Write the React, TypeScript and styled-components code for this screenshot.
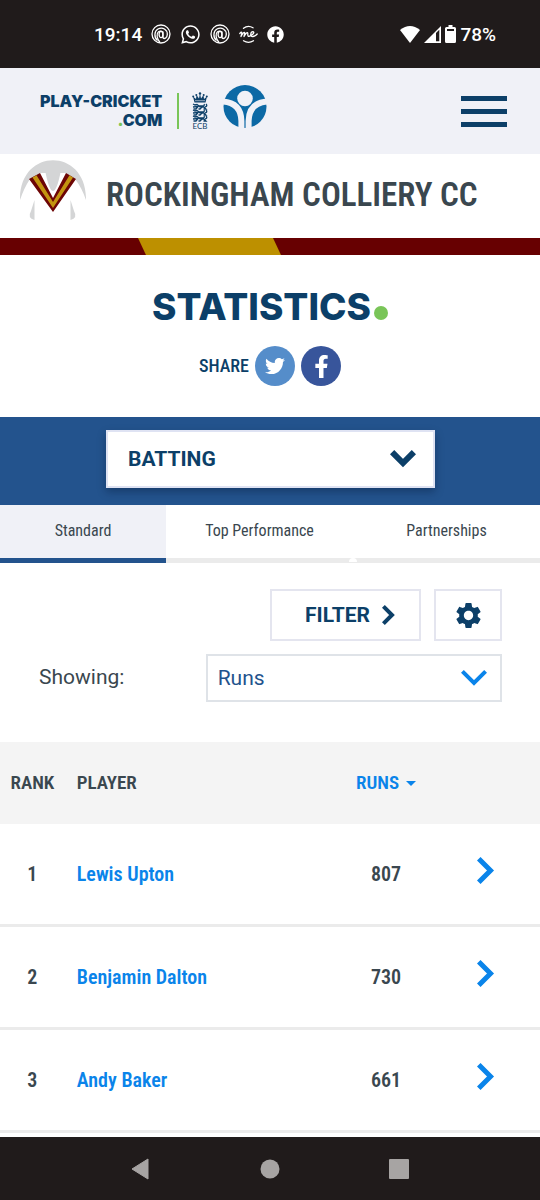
import React from 'react';
import styled, { createGlobalStyle } from 'styled-components';
import { FaWhatsapp, FaFacebook, FaTwitter, FaFacebookF } from 'react-icons/fa';
import { MdSettings } from 'react-icons/md';

const navy = '#0c3f68';
const sky = '#0a84ea';
const slate = '#3a474f';
const narrow = '"Roboto Condensed", "Liberation Sans Narrow", Roboto, sans-serif';

const GlobalStyle = createGlobalStyle`
  *, *::before, *::after { box-sizing: border-box; }
  body { margin: 0; background: #fff; font-family: Roboto, sans-serif; color: ${slate}; }
  a { color: inherit; text-decoration: none; }
  button, select { font: inherit; color: inherit; border-radius: 0; margin: 0; }
  svg { display: block; flex: none; }
`;

const Page = styled.div`
  min-height: 100vh;
  display: flex;
  flex-direction: column;
`;

const StatusBar = styled.div`
  height: 68px;
  padding: 0 44px 0 94px;
  display: flex;
  align-items: center;
  justify-content: space-between;
  background: #201b1b;
  color: #fff;
  font-size: 19px;
  font-weight: 500;
`;

const StatusGroup = styled.div<{ $gap: number }>`
  display: flex;
  align-items: center;
  gap: ${p => p.$gap}px;
`;

const Header = styled.header`
  height: 86px;
  padding: 0 33px 0 40px;
  display: flex;
  align-items: center;
  justify-content: space-between;
  background: #f0f1f7;
`;

const Brand = styled.a`
  display: flex;
  align-items: center;
  gap: 13px;
`;

const Wordmark = styled.span`
  display: flex;
  flex-direction: column;
  margin-right: 2px;
  font: 900 16px/19px Inter, sans-serif;
  color: ${navy};
  text-align: right;
`;

const BrandDot = styled.span`
  color: #79c558;
`;

const BrandRule = styled.span`
  width: 2px;
  height: 36px;
  background: #79c558;
`;

const BrandBall = styled.span`
  padding: 0 0 8px 2px;
`;

const MenuButton = styled.button`
  border: 0;
  padding: 0;
  background: none;
`;

const ClubBar = styled.section`
  height: 84px;
  padding: 0 20px;
  display: flex;
  align-items: center;
  gap: 20px;
`;

const Crest = styled.span`
  padding-bottom: 12px;
`;

const ClubName = styled.h1`
  margin: 0;
  padding-bottom: 2px;
  font: 600 33px/40px ${narrow};
  color: ${slate};
  white-space: nowrap;
`;

const Stripe = styled.div`
  height: 17px;
  display: grid;
  grid-template-columns: 138fr 143fr 259fr;
  background: #670001;
`;

const StripeAccent = styled.div`
  grid-column: 2;
  background: #bd9000;
  clip-path: polygon(0 0, calc(100% - 8px) 0, 100% 100%, 8px 100%);
`;

const TitleBlock = styled.section`
  height: 162px;
  padding-top: 28px;
  display: flex;
  flex-direction: column;
  align-items: center;
  gap: 15px;
`;

const Title = styled.h2`
  margin: 0;
  display: flex;
  align-items: baseline;
  gap: 3px;
  font: 800 37px/48px Inter, sans-serif;
  color: ${navy};
`;

const TitleDot = styled.span`
  width: 14px;
  height: 14px;
  border-radius: 50%;
  background: #79c558;
`;

const ShareRow = styled.div`
  display: flex;
  align-items: center;
  gap: 6px;
`;

const ShareLabel = styled.span`
  font: 500 18px/24px ${narrow};
  color: ${navy};
`;

const ShareLink = styled.a<{ $color: string }>`
  width: 40px;
  height: 40px;
  border-radius: 50%;
  display: flex;
  align-items: center;
  justify-content: center;
  background: ${p => p.$color};
  color: #fff;
`;

const CategoryBar = styled.section`
  height: 88px;
  padding: 13px 105px 0 106px;
  background: #23538d;
`;

const SelectBox = styled.div<{ $category?: boolean }>`
  display: grid;
  align-items: center;
  flex: 1;
  height: ${p => (p.$category ? 58 : 48)}px;
  border: ${p => (p.$category ? '2px solid #dfe3f3' : '2px solid #dfe3e8')};
  box-shadow: ${p => (p.$category ? '0 4px 8px rgba(0, 20, 50, 0.35)' : 'none')};
  background: #fff;
  color: ${p => (p.$category ? navy : '#23538d')};
  font-size: 21px;
  font-weight: ${p => (p.$category ? 700 : 400)};

  select, svg { grid-area: 1 / 1; }
  select {
    width: 100%;
    height: 100%;
    border: 0;
    padding: ${p => (p.$category ? '0 20px 1px' : '0 10px 1px')};
    appearance: none;
    background: transparent;
  }
  svg {
    justify-self: end;
    margin-right: ${p => (p.$category ? 17 : 13)}px;
    pointer-events: none;
  }
`;

const Tabs = styled.nav`
  display: grid;
  grid-template-columns: 166fr 187fr 187fr;
`;

const Tab = styled.a<{ $active?: boolean; $notch?: boolean }>`
  position: relative;
  height: 58px;
  padding-top: 13px;
  text-align: center;
  font: 400 16px/26px ${narrow};
  background: ${p => (p.$active ? '#f0f1f7' : '#fff')};
  border-bottom: 5px solid ${p => (p.$active ? '#23538d' : '#ebebeb')};

  &::after {
    content: '';
    display: ${p => (p.$notch ? 'block' : 'none')};
    position: absolute;
    left: -4px;
    bottom: -4px;
    width: 8px;
    height: 4px;
    border-radius: 4px 4px 0 0;
    background: #fff;
  }
`;

const Controls = styled.section`
  height: 179px;
  padding: 26px 38px 0 39px;
  display: flex;
  flex-direction: column;
  gap: 13px;
`;

const ButtonRow = styled.div`
  display: flex;
  justify-content: flex-end;
  gap: 13px;
`;

const OutlineButton = styled.button<{ $wide?: boolean }>`
  width: ${p => (p.$wide ? 151 : 68)}px;
  height: 52px;
  padding: ${p => (p.$wide ? '0 0 0 9px' : '0')};
  display: flex;
  align-items: center;
  justify-content: center;
  gap: 12px;
  border: 2px solid #e4e5ef;
  background: #fff;
  color: ${navy};
  font-size: 21px;
  font-weight: 700;
`;

const ShowingRow = styled.div`
  display: flex;
  align-items: center;
`;

const ShowingLabel = styled.label`
  width: 36%;
  padding-bottom: 2px;
  font-size: 21px;
  line-height: 28px;
`;

const Table = styled.table`
  width: 100%;
  table-layout: fixed;
  border-collapse: separate;
  border-spacing: 0;
  font: 600 20px/26px ${narrow};
`;

const RankCol = styled.col`
  width: 12%;
`;

const PlayerCol = styled.col`
  width: 50%;
`;

const HeadCell = styled.th<{ $name?: boolean }>`
  height: 82px;
  padding: 0 0 0 ${p => (p.$name ? 12 : 0)}px;
  background: #f4f4f4;
  font-size: 19px;
  font-weight: 600;
  text-align: ${p => (p.$name ? 'left' : 'center')};
`;

const Cell = styled.td<{ $name?: boolean }>`
  height: 103px;
  padding: 0 0 0 ${p => (p.$name ? 12 : 0)}px;
  border-bottom: 3px solid #ebebeb;
  text-align: ${p => (p.$name ? 'left' : 'center')};
`;

const SortButton = styled.button`
  padding: 0;
  border: 0;
  background: none;
  color: ${sky};
  display: inline-flex;
  align-items: center;
  gap: 7px;
`;

const PlayerLink = styled.a`
  color: ${sky};
`;

const RowLink = styled.a`
  display: flex;
  justify-content: center;
  padding-bottom: 7px;
  margin-right: 6px;
`;

const NavBar = styled.nav`
  height: 63px;
  margin-top: auto;
  padding: 0 131px 0 130px;
  display: flex;
  align-items: center;
  justify-content: space-between;
  background: #201b1b;

  button { border: 0; padding: 0; background: none; }
`;

const Chevron = ({ dir, size, weight, color }: { dir: 'down' | 'right'; size: number; weight: number; color: string }) => {
  const edge = weight * 0.354;
  const mid = size / 2;
  const depth = Math.ceil(mid + weight * 0.707);
  const down = dir === 'down';
  const w = down ? size : depth;
  const h = down ? depth : size;
  const d = down
    ? `M${edge} ${edge}L${mid} ${mid}L${size - edge} ${edge}`
    : `M${edge} ${edge}L${mid} ${mid}L${edge} ${size - edge}`;
  return (
    <svg width={w} height={h} viewBox={`0 0 ${w} ${h}`} fill="none" stroke={color} strokeWidth={weight} aria-hidden="true">
      <path d={d} />
    </svg>
  );
};

const SpiralIcon = () => (
  <svg width="20" height="20" viewBox="0 0 20 20" fill="none" stroke="#fff" strokeWidth="1.3">
    <circle cx="10" cy="10" r="9" />
    <path d="M6.500 16.500C2.500 13 3.500 7 7 5C11.500 2.500 16.500 5.500 16.300 10.500C16.200 13.500 13.500 15.500 12 13.800V7.500" />
    <path d="M9 18.500C5.500 14.500 5.300 9.500 7.500 7.800C9 6.700 11 7 12 8.500" />
    <ellipse cx="10" cy="10.500" rx="1.900" ry="3.200" />
  </svg>
);

const MeIcon = () => (
  <svg width="19" height="19" viewBox="0 0 19 19" fill="none" stroke="#fff" strokeWidth="1.3" strokeLinecap="round" strokeLinejoin="round">
    <path d="M4.500 3.300Q9 -0.300 14 2.800M4.500 15.800Q9.500 19 14.500 15.800" />
    <path d="M0.800 8.500Q3 6 2.800 8.500L2 11.500Q5 6 5.800 8L5 11.500Q8 6 8.800 8.200Q8.500 12 10.500 11.200C14 10 16 7 14 6.700C11.500 6.700 10.500 12 14 11.500Q16.500 11 18.200 9" />
  </svg>
);

const WifiIcon = () => (
  <svg width="20" height="17" viewBox="0 0 20 17" fill="#fff"><path d="M0 4Q10 -4 20 4L10 17Z" /></svg>
);

const SignalIcon = () => (
  <svg width="17" height="17" viewBox="0 0 17 17">
    <path d="M17 0V17H0Z" fill="#fff" />
    <path d="M12 7L15.300 3.700V15.300H12Z" fill="#201b1b" />
  </svg>
);

const BatteryIcon = () => (
  <svg width="11" height="18" viewBox="0 0 11 18">
    <path d="M3.500 0H7.500V2H9.500Q11 2 11 3.500V16.500Q11 18 9.500 18H1.500Q0 18 0 16.500V3.500Q0 2 1.500 2H3.500Z" fill="#fff" />
    <path d="M2 4H9V6H2Z" fill="#201b1b" />
  </svg>
);

const EcbCrest = () => (
  <svg width="16" height="40" viewBox="0 -1 16 40" fill={navy}>
    <path d="M1 4.500L4 7L4.500 3L7 6.500L8 1L9 6.500L11.500 3L12 7L15 4.500L13.500 10.500H2.500Z" />
    <circle cx="8" cy="1.500" r="1.200" /><circle cx="4.300" cy="3" r="1" /><circle cx="11.700" cy="3" r="1" />
    <circle cx="1.200" cy="4.500" r="1" /><circle cx="14.800" cy="4.500" r="1" />
    <path d="M3 8.700H13" stroke="#f0f1f7" strokeWidth="0.600" />
    {[12, 18, 24].map(y => (
      <g key={y} fill="none" stroke={navy} strokeWidth="1.300">
        <path d={`M1 ${y}L3 ${y + 1}L5 ${y + 0.5}L7 ${y + 2}H11Q13 ${y + 1.500} 12 ${y}M14 ${y}Q16 ${y + 2} 13 ${y + 3}M1 ${y + 3}L6 ${y + 2.500}L4 ${y + 5}H1.500M7 ${y + 2.500}L12 ${y + 3}L14 ${y + 5}H11.500M10 ${y + 3}L8 ${y + 5}H6.500`} />
      </g>
    ))}
    <text x="8" y="36.500" textAnchor="middle" fontFamily="Lato, sans-serif" fontSize="8">ECB</text>
  </svg>
);

const BallFigure = () => (
  <svg width="44" height="44" viewBox="0 0 44 44">
    <circle cx="22" cy="21.500" r="21.500" fill="#0c69a5" />
    <g fill="none" stroke="#f0f1f7" strokeWidth="6">
      <path d="M-1 16.500Q18 17.500 18.400 36V46" />
      <path d="M45 16.500Q26 17.500 25.600 36V46" />
    </g>
    <circle cx="22" cy="13.500" r="7.800" fill="#f0f1f7" />
  </svg>
);

const ClubShirt = () => (
  <svg width="66" height="60" viewBox="0 0 66 60">
    <path d="M0 40C-1 -13 67 -13 66 40Q62 28 55 19L45 13H21L10 19Q4 28 0 40Z" fill="#d4d5d6" />
    <path d="M20 13H46L33 42Z" fill="#fff" />
    <path d="M25 10H41Q37 31 33 31Q29 31 25 10Z" fill="#d4d5d6" />
    <path d="M14.500 40V60Q7 58 11 51ZM50.500 40L54 51Q58 58 50.500 60Z" fill="#d4d5d6" />
    <path d="M9 19L20 13L33 38L46 13L56 19L33 52Z" fill="#6d0505" />
    <path d="M12.500 17.500L16.500 15.200L33 42L49.500 15.200L53 17.500L33 48Z" fill="#c39410" />
  </svg>
);

const MenuIcon = () => (
  <svg width="46" height="31" viewBox="0 0 46 31" fill={navy}>
    <path d="M0 0H46V5H0ZM0 13H46V18H0ZM0 26H46V31H0Z" />
  </svg>
);

const players = [
  { rank: 1, name: 'Lewis Upton', runs: 807 },
  { rank: 2, name: 'Benjamin Dalton', runs: 730 },
  { rank: 3, name: 'Andy Baker', runs: 661 },
];

export default function App() {
  return (
    <>
      <GlobalStyle />
      <Page>
        <StatusBar>
          <StatusGroup $gap={9}>
            <span>19:14</span>
            <SpiralIcon />
            <FaWhatsapp size={21} />
            <SpiralIcon />
            <MeIcon />
            <FaFacebook size={17} />
          </StatusGroup>
          <StatusGroup $gap={4}>
            <WifiIcon />
            <SignalIcon />
            <BatteryIcon />
            <span>78%</span>
          </StatusGroup>
        </StatusBar>

        <Header>
          <Brand href="#">
            <Wordmark>
              <span>PLAY-CRICKET</span>
              <span><BrandDot>.</BrandDot>COM</span>
            </Wordmark>
            <BrandRule />
            <EcbCrest />
            <BrandBall><BallFigure /></BrandBall>
          </Brand>
          <MenuButton aria-label="Menu"><MenuIcon /></MenuButton>
        </Header>

        <ClubBar>
          <Crest><ClubShirt /></Crest>
          <ClubName>ROCKINGHAM COLLIERY CC</ClubName>
        </ClubBar>
        <Stripe><StripeAccent /></Stripe>

        <TitleBlock>
          <Title>STATISTICS<TitleDot /></Title>
          <ShareRow>
            <ShareLabel>SHARE</ShareLabel>
            <ShareLink href="#" aria-label="Share on Twitter" $color="#558dca"><FaTwitter size={20} /></ShareLink>
            <ShareLink href="#" aria-label="Share on Facebook" $color="#38559b"><FaFacebookF size={23} /></ShareLink>
          </ShareRow>
        </TitleBlock>

        <CategoryBar>
          <SelectBox $category>
            <select aria-label="Category"><option>BATTING</option></select>
            <Chevron dir="down" size={26} weight={6} color={navy} />
          </SelectBox>
        </CategoryBar>

        <Tabs>
          <Tab href="#" $active>Standard</Tab>
          <Tab href="#">Top Performance</Tab>
          <Tab href="#" $notch>Partnerships</Tab>
        </Tabs>

        <Controls>
          <ButtonRow>
            <OutlineButton $wide>FILTER<Chevron dir="right" size={20} weight={4} color={navy} /></OutlineButton>
            <OutlineButton aria-label="Settings"><MdSettings size={31} /></OutlineButton>
          </ButtonRow>
          <ShowingRow>
            <ShowingLabel htmlFor="metric">Showing:</ShowingLabel>
            <SelectBox>
              <select id="metric"><option>Runs</option></select>
              <Chevron dir="down" size={26} weight={4} color={sky} />
            </SelectBox>
          </ShowingRow>
        </Controls>

        <Table>
          <colgroup>
            <RankCol />
            <PlayerCol />
            <col />
            <col />
          </colgroup>
          <thead>
            <tr>
              <HeadCell>RANK</HeadCell>
              <HeadCell $name>PLAYER</HeadCell>
              <HeadCell>
                <SortButton>
                  RUNS
                  <svg width="10" height="5" viewBox="0 0 10 5" fill={sky}><path d="M0 0H10L5 5Z" /></svg>
                </SortButton>
              </HeadCell>
              <HeadCell />
            </tr>
          </thead>
          <tbody>
            {players.map(p => (
              <tr key={p.rank}>
                <Cell>{p.rank}</Cell>
                <Cell $name><PlayerLink href="#">{p.name}</PlayerLink></Cell>
                <Cell>{p.runs}</Cell>
                <Cell>
                  <RowLink href="#" aria-label={`View ${p.name}`}>
                    <Chevron dir="right" size={27} weight={5} color={sky} />
                  </RowLink>
                </Cell>
              </tr>
            ))}
          </tbody>
        </Table>

        <NavBar>
          <button aria-label="Back">
            <svg width="20" height="22" viewBox="0 0 20 22"><path d="M2 11L18 1V21Z" fill="#a7a4a3" stroke="#a7a4a3" strokeLinejoin="round" /></svg>
          </button>
          <button aria-label="Home">
            <svg width="20" height="20" viewBox="0 0 20 20"><circle cx="10" cy="10" r="9.500" fill="#a7a4a3" /></svg>
          </button>
          <button aria-label="Recent apps">
            <svg width="20" height="20" viewBox="0 0 20 20"><rect width="20" height="20" rx="1" fill="#a7a4a3" /></svg>
          </button>
        </NavBar>
      </Page>
    </>
  );
}
